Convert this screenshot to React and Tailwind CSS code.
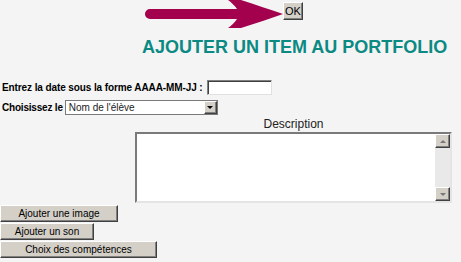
import React from "react";

const winBtn =
  "bg-[#d4d0c8] border border-t-white border-l-white border-b-[#404040] border-r-[#404040] shadow-[inset_-1px_-1px_0_#808080] text-black text-[10px] leading-none flex items-center justify-center";

const Arrow = () => (
  <svg width="143" height="28" viewBox="0 0 143 28" className="ml-[140px] shrink-0">
    <path
      d="M10 9 L97 9 C95 6 91 2 88 0 L101 0 C117 5 131 10 143 14 C131 18 117 23 101 28 L88 28 C91 26 95 22 97 19 L10 19 A5 5 0 0 1 10 9 Z"
      fill="#a3004e"
    />
  </svg>
);

export default function App() {
  return (
    <div className="min-h-screen w-[461px] bg-[#f4f4f4] font-['Liberation_Sans',Arial,sans-serif] text-black">
      {/* arrow pointing at the OK button */}
      <div className="flex items-start h-[28px]">
        <Arrow />
        <button className={`${winBtn} mt-[2px] w-[20px] h-[18px] text-[11px]`}>OK</button>
      </div>

      <h1 className="mt-[9px] pl-[142px] text-[18px] leading-[21px] font-bold text-[#0b8a84] whitespace-nowrap">
        AJOUTER UN ITEM AU PORTFOLIO
      </h1>

      {/* date row */}
      <div className="mt-[22px] flex items-end pl-[2px] h-[15px]">
        <span className="text-[10px] leading-[12px] font-bold tracking-[-0.1px] mb-[1px] whitespace-nowrap">
          Entrez la date sous la forme AAAA-MM-JJ :
        </span>
        <div className="ml-[4px] w-[65px] h-[15px] bg-white border border-t-[#808080] border-l-[#808080] border-b-[#e0e0e0] border-r-[#e0e0e0] shadow-[inset_1px_1px_0_#404040]" />
      </div>

      {/* student select */}
      <div className="mt-[5px] flex items-end pl-[2px] h-[15px]">
        <span className="text-[10px] leading-[12px] font-bold tracking-[-0.2px] mb-[1px] whitespace-nowrap">
          Choisissez le
        </span>
        <div className="ml-[2px] w-[153px] h-[15px] bg-white border border-[#7a7a7a] flex items-center">
          <span className="flex-1 pl-[3px] text-[10px] leading-none text-[#222]">Nom de l'élève</span>
          <div className={`${winBtn} w-[13px] h-[13px]`}>
            <span className="block w-0 h-0 border-l-[3px] border-r-[3px] border-t-[3px] border-l-transparent border-r-transparent border-t-black" />
          </div>
        </div>
      </div>

      {/* description */}
      <div className="mt-[2px] ml-[135px] w-[317px]">
        <div className="text-center text-[12px] leading-[14px] text-[#222]">Description</div>
        <div className="mt-[1px] h-[71px] flex bg-white border-2 border-t-[#7a7a7a] border-l-[#7a7a7a] border-b-[#e4e4e4] border-r-[#e4e4e4]">
          <div className="flex-1" />
          <div className="w-[15px] bg-[#e9e9e9] flex flex-col justify-between">
            <div className={`${winBtn} w-[15px] h-[14px]`}>
              <span className="block w-0 h-0 border-l-[3px] border-r-[3px] border-b-[3px] border-l-transparent border-r-transparent border-b-[#777]" />
            </div>
            <div className={`${winBtn} w-[15px] h-[14px]`}>
              <span className="block w-0 h-0 border-l-[3px] border-r-[3px] border-t-[3px] border-l-transparent border-r-transparent border-t-[#777]" />
            </div>
          </div>
        </div>
      </div>

      {/* action buttons */}
      <div className="mt-[2px] flex flex-col items-start gap-[1px]">
        <button className={`${winBtn} w-[118px] h-[17px]`}>Ajouter une image</button>
        <button className={`${winBtn} w-[94px] h-[17px]`}>Ajouter un son</button>
        <button className={`${winBtn} w-[157px] h-[17px]`}>Choix des compétences</button>
      </div>
    </div>
  );
}
